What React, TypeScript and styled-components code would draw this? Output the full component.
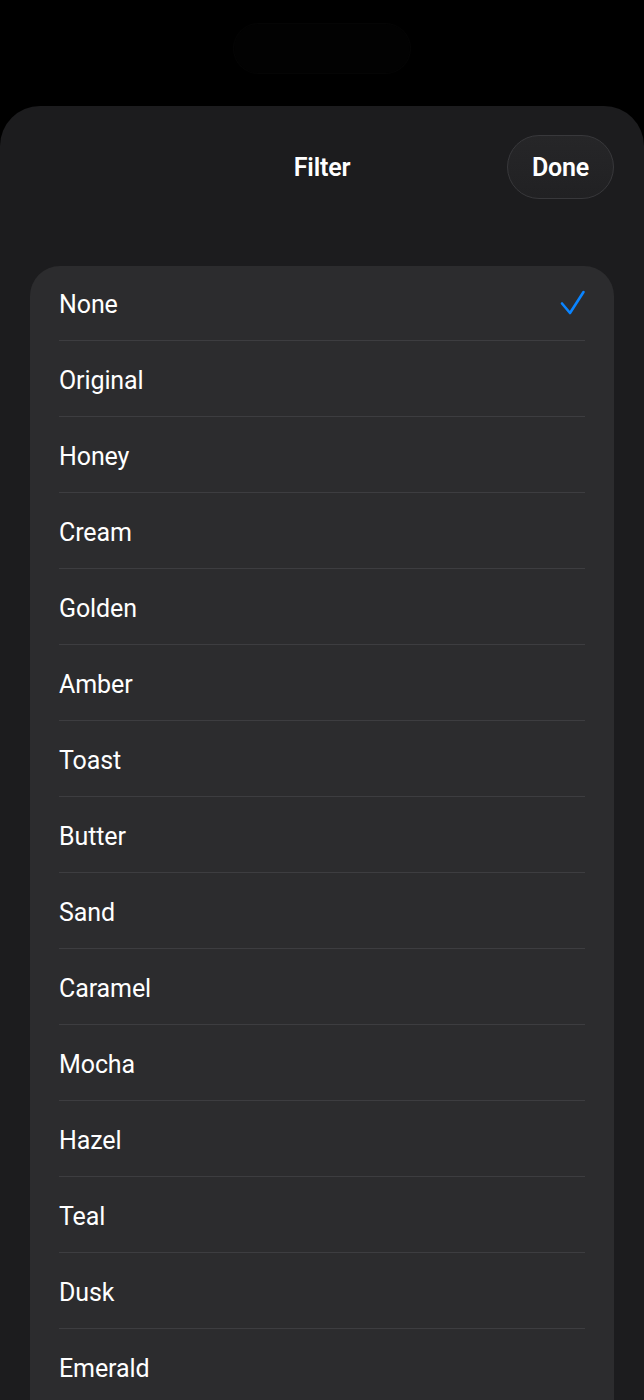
import React, { useState } from 'react'
import styled, { createGlobalStyle } from 'styled-components'

const GlobalStyle = createGlobalStyle`
  html, body {
    margin: 0;
    padding: 0;
    background: #000;
    height: 1400px;
    overflow: hidden;
  }
  body {
    font-family: Roboto, "Liberation Sans", Arial, sans-serif;
    -webkit-font-smoothing: antialiased;
  }
`

const Screen = styled.div`
  width: 644px;
  height: 1400px;
  background: #000;
  display: flex;
  flex-direction: column;
  overflow: hidden;
`

const StatusArea = styled.div`
  height: 106px;
  flex-shrink: 0;
  display: flex;
  justify-content: center;
  padding-top: 24px;
  box-sizing: border-box;
`

// dynamic island, barely visible against the black
const Island = styled.div`
  width: 176px;
  height: 49px;
  border-radius: 25px;
  background: #020202;
  box-shadow: 0 0 0 1px #050505;
`

const Sheet = styled.div`
  flex: 1;
  background: #1c1c1e;
  border-radius: 40px 40px 0 0;
  padding: 29px 30px 0;
  display: flex;
  flex-direction: column;
`

const Header = styled.div`
  display: grid;
  grid-template-columns: 1fr auto 1fr;
  align-items: center;
  height: 64px;
`

const Title = styled.div`
  grid-column: 2;
  color: #fff;
  font-size: 25px;
  font-weight: 600;
  letter-spacing: -0.2px;
`

const DoneButton = styled.button`
  grid-column: 3;
  justify-self: end;
  width: 107px;
  height: 64px;
  border-radius: 32px;
  background: linear-gradient(180deg, #262628 0%, #212123 100%);
  border: 1px solid #38383b;
  color: #fff;
  font-family: inherit;
  font-size: 25px;
  font-weight: 600;
  letter-spacing: -0.2px;
  padding: 0;
  cursor: pointer;
`

const List = styled.div`
  margin-top: 67px;
  background: #2c2c2e;
  border-radius: 30px 30px 0 0;
  display: flex;
  flex-direction: column;
`

const Row = styled.div<{ last: boolean }>`
  height: 76px;
  margin: 0 29px;
  box-sizing: border-box;
  display: flex;
  align-items: center;
  justify-content: space-between;
  border-bottom: ${p => (p.last ? 'none' : '1px solid #3d3d40')};
  padding-top: 3px;
  cursor: pointer;
  &:first-child {
    height: 75px;
  }
`

const Label = styled.span`
  color: #fff;
  font-size: 25px;
  font-weight: 400;
  letter-spacing: -0.1px;
`

const Check = styled.svg`
  width: 26px;
  height: 26px;
  margin-right: -1px;
  margin-top: -3px;
`

const FILTERS = [
  'None',
  'Original',
  'Honey',
  'Cream',
  'Golden',
  'Amber',
  'Toast',
  'Butter',
  'Sand',
  'Caramel',
  'Mocha',
  'Hazel',
  'Teal',
  'Dusk',
  'Emerald',
]

export default function App() {
  const [selected, setSelected] = useState('None')

  return (
    <>
      <GlobalStyle />
      <Screen>
        <StatusArea>
          <Island />
        </StatusArea>
        <Sheet>
          <Header>
            <Title>Filter</Title>
            <DoneButton>Done</DoneButton>
          </Header>
          <List>
            {FILTERS.map((name, i) => (
              <Row key={name} last={i === FILTERS.length - 1} onClick={() => setSelected(name)}>
                <Label>{name}</Label>
                {selected === name && (
                  <Check viewBox="0 0 26 26">
                    <polyline
                      points="2,13.5 10,23 23.5,2"
                      fill="none"
                      stroke="#0a84ff"
                      strokeWidth="2.6"
                      strokeLinecap="round"
                      strokeLinejoin="round"
                    />
                  </Check>
                )}
              </Row>
            ))}
          </List>
        </Sheet>
      </Screen>
    </>
  )
}
